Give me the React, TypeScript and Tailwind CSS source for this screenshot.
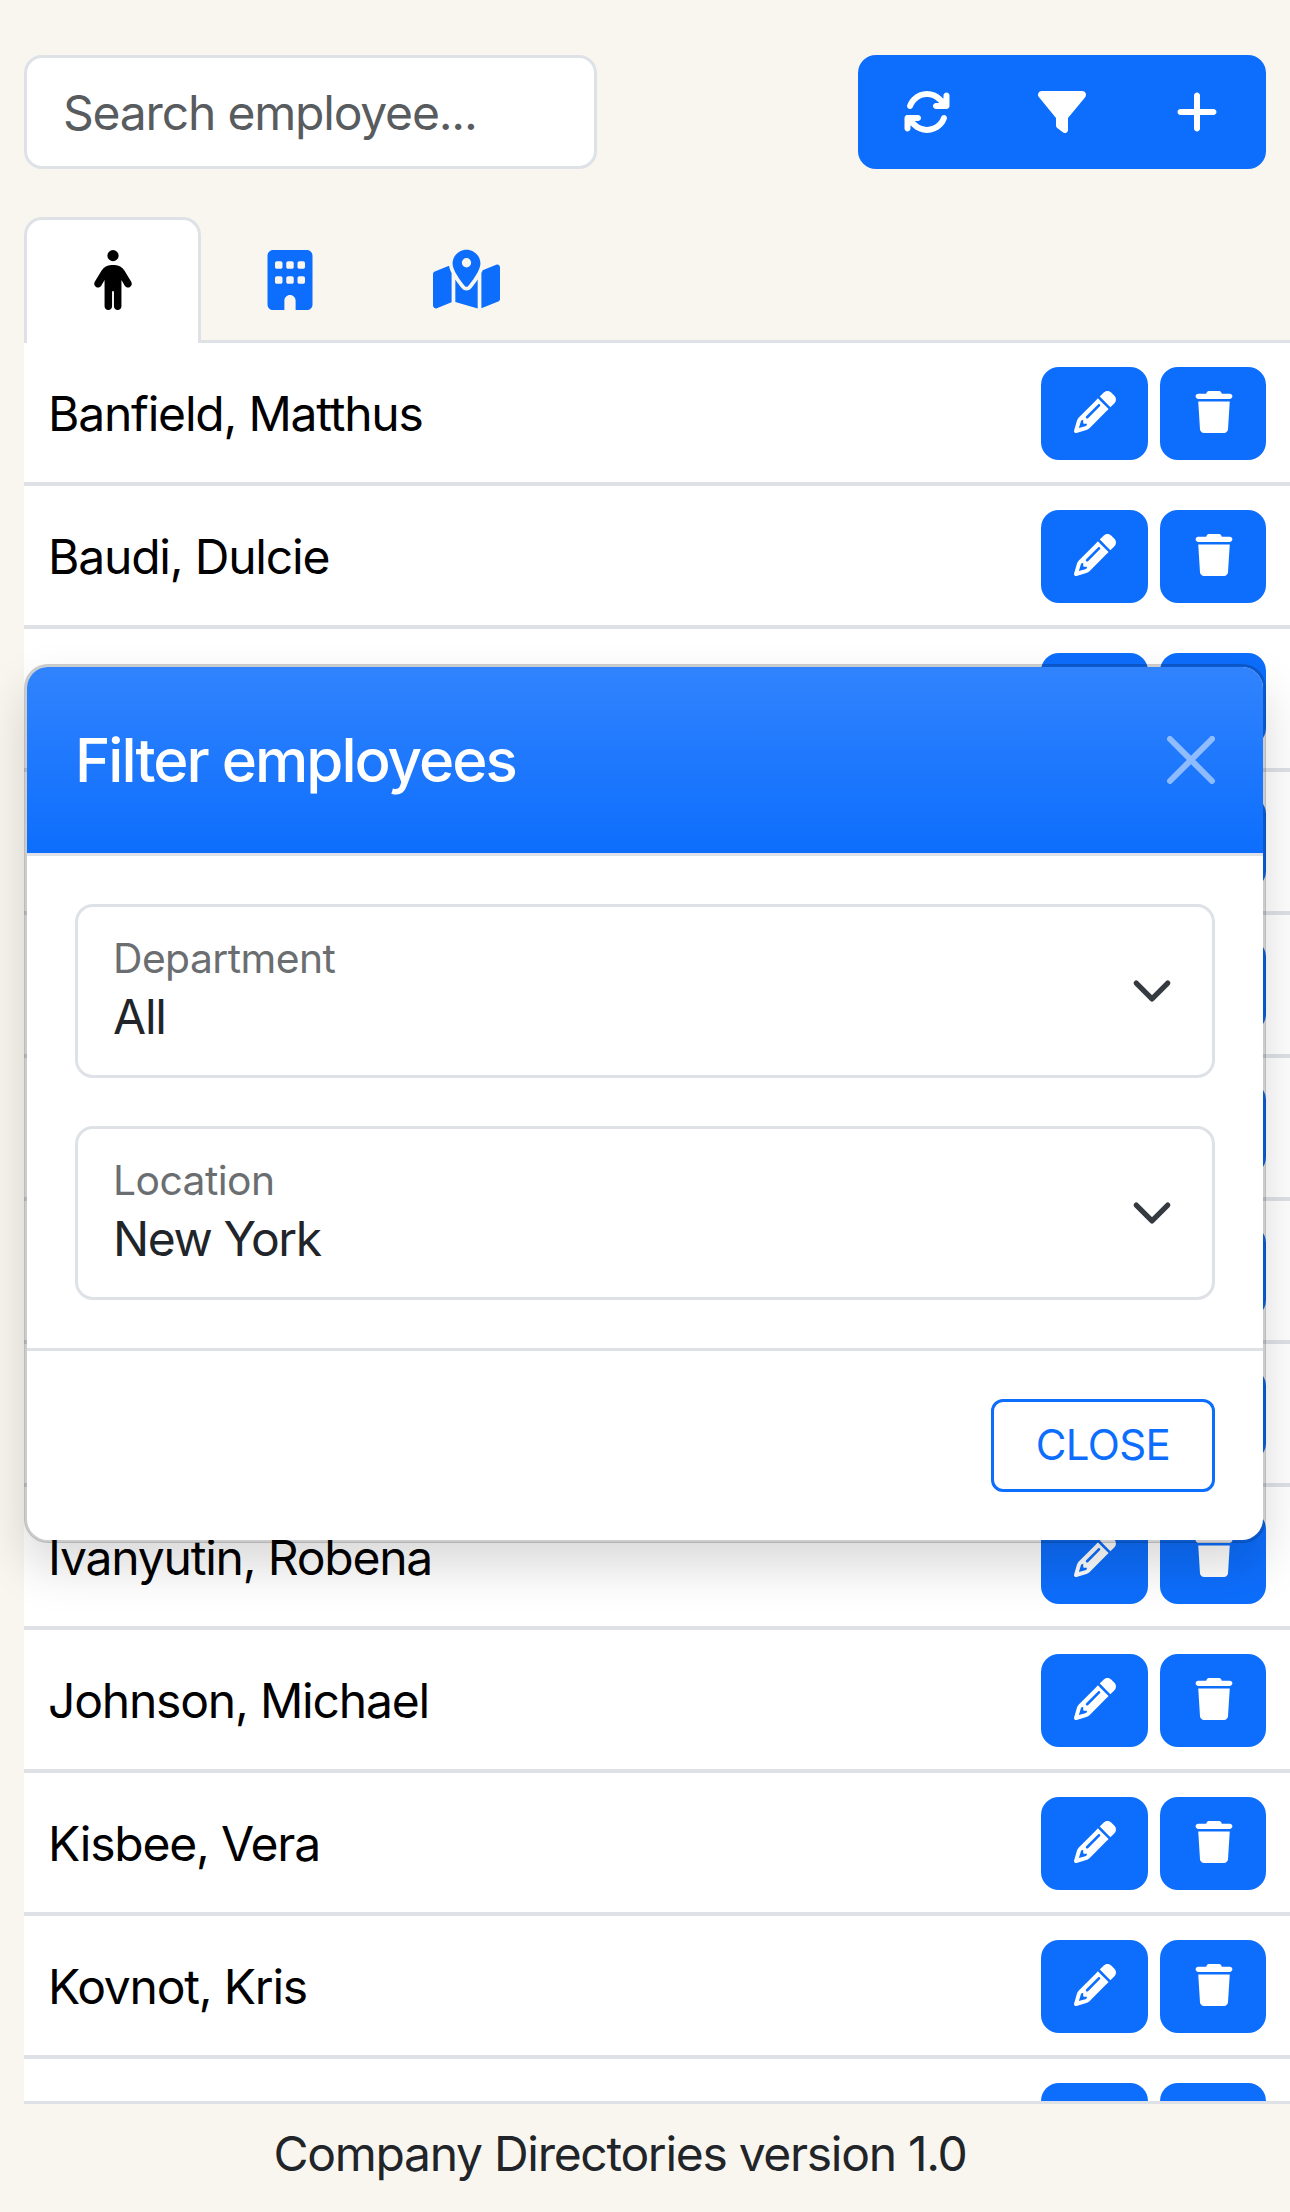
import { FaArrowsRotate, FaBuilding, FaFilter, FaMapLocationDot, FaPencil, FaPerson, FaPlus, FaTrash } from "react-icons/fa6";

const rows = [
  "Banfield, Matthus",
  "Baudi, Dulcie",
  "",
  "",
  "",
  "",
  "",
  "",
  "Ivanyutin, Robena",
  "Johnson, Michael",
  "Kisbee, Vera",
  "Kovnot, Kris",
  "",
];

function EmployeeRow({ name }: { name: string }) {
  return (
    <div className="flex h-[143px] shrink-0 items-center justify-between border-b-[4px] border-[#dee2e6] bg-white pl-6 pr-6">
      <span className="pt-[3px] text-[48px] leading-[72px] tracking-[-1.2px] text-black">{name}</span>
      <div className="mt-[1px] flex gap-3">
        <button className="flex h-[93px] w-[107px] items-center justify-center rounded-[18px] bg-[#0d6efd] pb-[3px] text-[42px] text-white">
          <FaPencil />
        </button>
        <button className="flex h-[93px] w-[106px] items-center justify-center rounded-[18px] bg-[#0d6efd] pb-[3px] pl-[2px] text-[42px] text-white">
          <FaTrash />
        </button>
      </div>
    </div>
  );
}

function FloatingSelect({ label, value, valueTracking }: { label: string; value: string; valueTracking: string }) {
  return (
    <div className="relative h-[174px] rounded-[18px] border-[3px] border-[#dee2e6] bg-white pl-[35px] pt-[29px]">
      <div className="text-[40.8px] leading-[44px] tracking-[-0.56px] text-[#6b6e71]">{label}</div>
      <div className={"mt-[1px] text-[48px] leading-[72px] text-[#212529] " + valueTracking}>{value}</div>
      <svg viewBox="0 0 16 16" className="absolute right-[39px] top-[63px] h-[42px] w-[42px]" fill="none" stroke="#343a40" strokeWidth="2" strokeLinecap="round" strokeLinejoin="round">
        <path d="m2 5 6 6 6-6" />
      </svg>
    </div>
  );
}

export default function App() {
  return (
    <div className="relative flex h-[2212px] w-[1290px] flex-col overflow-hidden bg-[#f9f6ef] pl-6 font-['Inter','Liberation_Sans',sans-serif]">
      <div className="flex items-start justify-between pr-6 pt-[55px]">
        <div className="flex h-[114px] w-[573px] items-center rounded-[18px] border-[3px] border-[#dee2e6] bg-white pl-[36px] pt-[2px] text-[48px] tracking-[-1.2px] text-[#595c5f]">
          Search employee...
        </div>
        <div className="flex h-[114px] w-[408px] items-center rounded-[18px] bg-[#0d6efd] text-[48px] text-white">
          <span className="flex flex-1 justify-center pl-[2px]"><FaArrowsRotate /></span>
          <span className="flex flex-1 justify-center"><FaFilter /></span>
          <span className="flex flex-1 justify-center pr-[2px]"><FaPlus /></span>
        </div>
      </div>

      <div className="mt-[48px] flex h-[126px] border-b-[3px] border-[#dee2e6] text-[60px] text-[#0d6efd]">
        <div className="-mb-[3px] flex h-[126px] w-[177px] justify-center rounded-t-[18px] border-[3px] border-b-0 border-[#dee2e6] bg-white pt-[30px] text-black">
          <FaPerson />
        </div>
        <div className="flex w-[177px] justify-center pt-[33px]"><FaBuilding /></div>
        <div className="flex w-[177px] justify-center pt-[29px] text-[67px]"><FaMapLocationDot /></div>
      </div>

      <div className="flex min-h-0 flex-1 flex-col overflow-hidden">
        {rows.map((name, i) => (
          <EmployeeRow key={i} name={name} />
        ))}
      </div>

      <div className="flex h-[111px] shrink-0 items-center justify-center border-t-[3px] border-[#dee2e6] pb-[8px] pr-[74px] text-[48px] tracking-[-1.3px] text-[#212529]">
        Company Directories version 1.0
      </div>

      <div className="absolute left-6 top-[664px] w-[1242px] rounded-[24px] border-[3px] border-black/20 bg-white bg-clip-padding shadow-[0_24px_48px_rgba(0,0,0,0.15)]">
        <div className="flex h-[189px] items-center justify-between rounded-t-[21px] border-b-[3px] border-[#dee2e6] bg-[#0d6efd] bg-[linear-gradient(180deg,rgba(255,255,255,0.15),rgba(255,255,255,0))] pl-[48px] pr-[48px] text-white">
          <h5 className="text-[60px] font-medium leading-[72px] tracking-[-2px]">Filter employees</h5>
          <svg viewBox="0 0 16 16" className="h-[48px] w-[48px] opacity-50" fill="currentColor">
            <path d="M.293.293a1 1 0 0 1 1.414 0L8 6.586 14.293.293a1 1 0 1 1 1.414 1.414L9.414 8l6.293 6.293a1 1 0 0 1-1.414 1.414L8 9.414l-6.293 6.293a1 1 0 0 1-1.414-1.414L6.586 8 .293 1.707a1 1 0 0 1 0-1.414z" />
          </svg>
        </div>
        <div className="flex flex-col gap-[48px] p-[48px]">
          <FloatingSelect label="Department" value="All" valueTracking="tracking-[-1.2px]" />
          <FloatingSelect label="Location" value="New York" valueTracking="tracking-[-1.4px]" />
        </div>
        <div className="flex justify-end border-t-[3px] border-[#dee2e6] p-[48px]">
          <button className="h-[93px] w-[224px] rounded-[12px] border-[3px] border-[#0d6efd] pb-[2px] text-[42px] tracking-[-0.6px] text-[#0d6efd]">CLOSE</button>
        </div>
      </div>
    </div>
  );
}
